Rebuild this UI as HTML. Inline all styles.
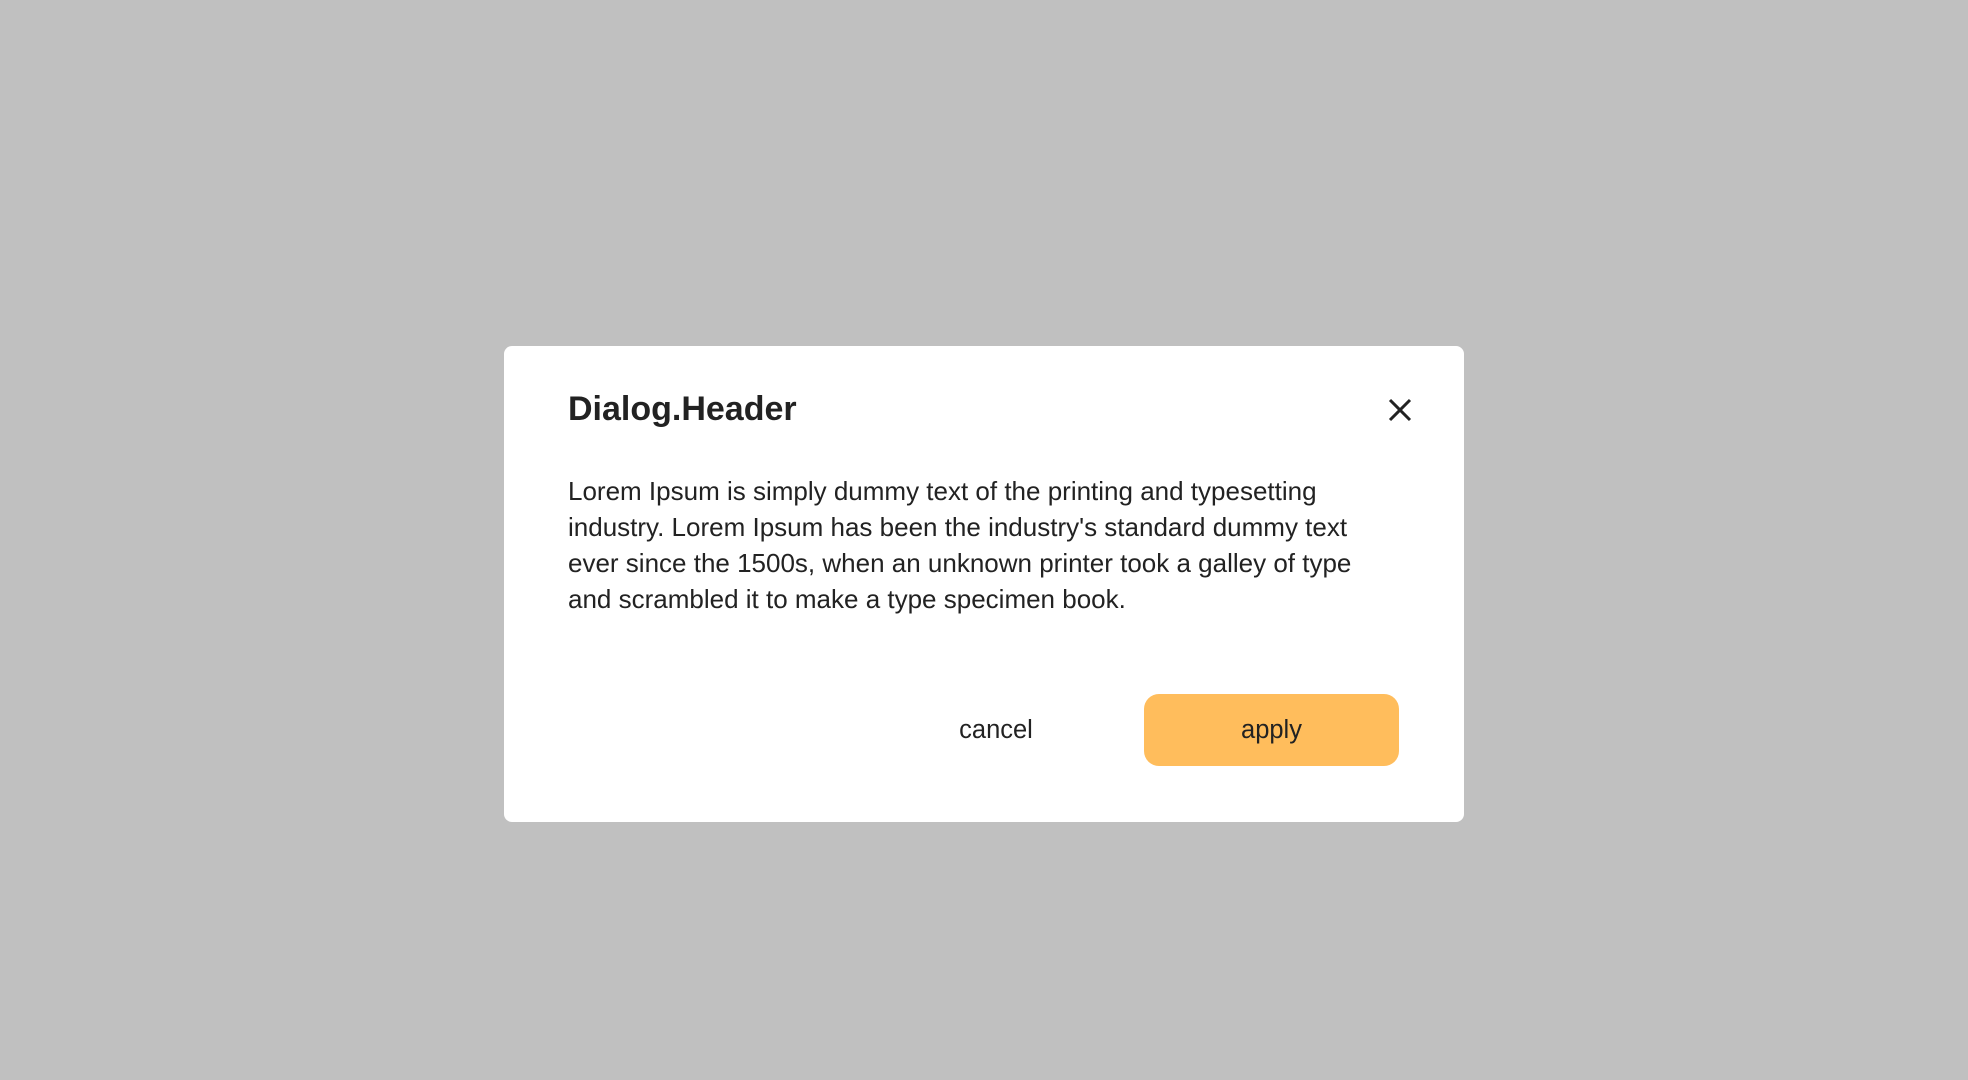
<!DOCTYPE html>
<html><head><meta charset="utf-8"><style>
html,body{margin:0;padding:0;width:1968px;height:1080px;background:#c0c0c0;overflow:hidden;font-family:"Liberation Sans",sans-serif;color:#222;}
.dlg{position:absolute;left:504px;top:346px;width:960px;height:476px;background:#fff;border-radius:8px;}
.h{position:absolute;left:64px;top:43px;font-size:34px;font-weight:bold;line-height:40px;}
.x{position:absolute;left:884px;top:52px;width:24px;height:24px;}
.b{position:absolute;left:64px;top:127px;width:820px;font-size:26px;line-height:36px;}
.cancel{position:absolute;left:428px;top:348px;width:128px;height:72px;line-height:73px;text-align:center;font-size:25.5px;}
.apply{position:absolute;left:640px;top:348px;width:255px;height:72px;line-height:73px;text-align:center;font-size:25.5px;background:#ffbd5c;border-radius:15px;}
</style></head><body>
<div class="dlg">
<div class="h">Dialog.Header</div>
<svg class="x" viewBox="0 0 24 24"><path d="M2 2L22 22M22 2L2 22" stroke="#222" stroke-width="3" fill="none"/></svg>
<div class="b">Lorem Ipsum is simply dummy text of the printing and typesetting industry. Lorem Ipsum has been the industry's standard dummy text ever since the 1500s, when an unknown printer took a galley of type and scrambled it to make a type specimen book.</div>
<div class="cancel">cancel</div>
<div class="apply">apply</div>
</div>
</body></html>
